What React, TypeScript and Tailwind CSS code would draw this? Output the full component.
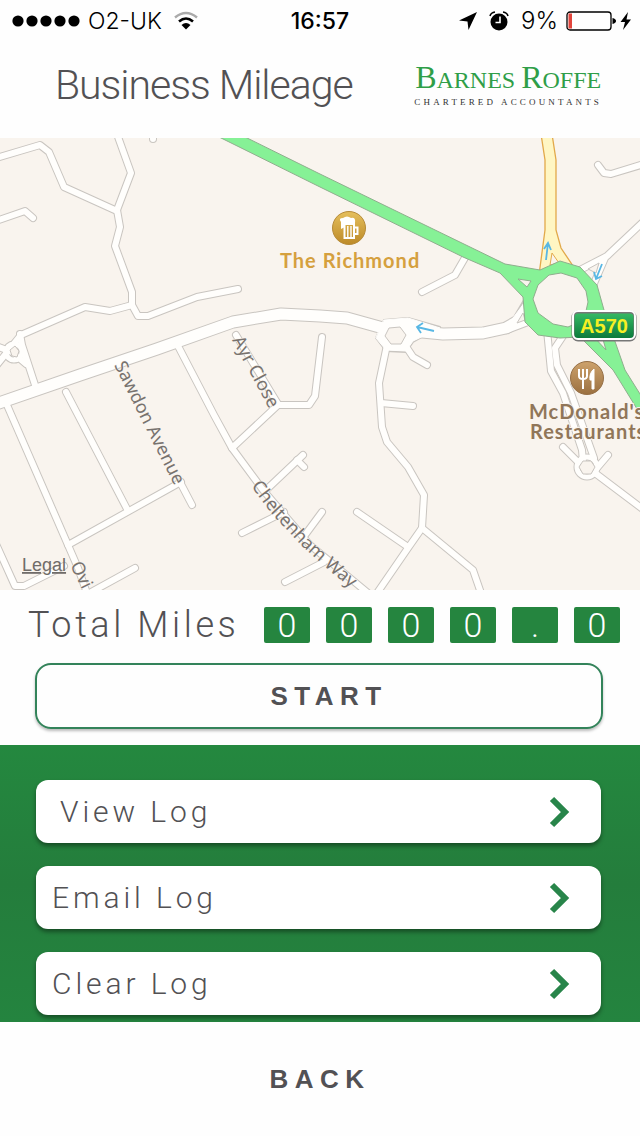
import React from "react";

interface LogLink {
  label: string;
  indent: string;
}

const logLinks: LogLink[] = [
  { label: "View Log", indent: "pl-6" },
  { label: "Email Log", indent: "pl-4" },
  { label: "Clear Log", indent: "pl-4" },
];

const digits = ["0", "0", "0", "0", ".", "0"];

const mainRoads = [
  "M-4 404 L80 375 L157 349 L233 322 L281 314 L320 316 L347 318 L383 328 L396 331",
  "M398 336 L412 331 L443 334 L483 333 L506 328 L534 312",
];

const smallRoads = [
  "M-4 158 L40 145 L49 152 L64 187 L117 211",
  "M117 134 L131 173 L117 210 L120 227 L115 246 L132 292 L132 305 L138 316 L148 316 L197 297 L238 289",
  "M132 305 L110 311 L85 307 L21 335 L-4 366",
  "M-4 221 L25 211 L33 218",
  "M20 334 L22 345 L36 388",
  "M-4 346 L12 352 L26 364",
  "M7 405 L68 545 L78 568 L88 596",
  "M66 392 L127 509",
  "M68 545 L181 482",
  "M181 484 L192 505",
  "M-4 544 L15 586 L24 586 L64 566",
  "M84 596 L135 568",
  "M177 344 L214 415 L232 448 L263 490 L310 545 L374 598",
  "M232 448 L278 405 L309 405 L315 396 L322 337",
  "M236 335 L278 404",
  "M266 490 L303 455",
  "M297 460 L304 467",
  "M242 533 L284 512",
  "M322 512 L305 535",
  "M285 582 L324 562",
  "M387 345 L379 383 L382 427 L387 442 L408 467 L424 495 L422 528 L408 548 L375 596",
  "M381 403 L413 406",
  "M357 512 L408 547",
  "M422 528 L473 570 L482 596",
  "M405 345 L413 357 L427 365",
  "M598 165 L604 173 L611 174 L644 164",
  "M153 134 L153 139",
  "M466 256 L455 275 L422 292",
  "M644 221 L607 256 L580 270",
  "M605 258 L592 288",
  "M547 330 L551 371 L563 393 L582 450 L583 462",
  "M563 336 L555 348 L557 365 L571 393 L594 458",
  "M563 447 L578 462",
  "M608 455 L597 468",
  "M595 473 L644 510",
  "M507 330 L536 319",
];

const StatusBar = () => (
  <header className="flex h-[42px] items-center justify-between px-3 font-['Inter',sans-serif] text-black">
    <div className="flex flex-1 items-center gap-2">
      <svg viewBox="0 0 68 12" className="h-3 w-17" aria-hidden="true">
        {[6, 20, 34, 48, 62].map((cx) => (
          <circle key={cx} cx={cx} cy="6" r="5.6" />
        ))}
      </svg>
      <span className="text-[23px] font-light">O2-UK</span>
      <svg viewBox="0 0 24 19" className="ml-1 h-5 w-6" fill="none" aria-hidden="true">
        <path d="M1 6 Q12 -3 23 6" stroke="#aaa" strokeWidth="2.4" />
        <path d="M5 10 Q12 4 19 10" stroke="#000" strokeWidth="2.6" />
        <path d="M12 18 L7.5 13.5 Q12 9.500 16.500 13.500 Z" fill="#000" />
      </svg>
    </div>
    <time className="text-[23px] font-medium">16:57</time>
    <div className="flex flex-1 items-center justify-end gap-3">
      <svg viewBox="0 0 18 18" className="h-[18px] w-[18px]" aria-hidden="true">
        <path d="M18 0 L9.500 18 L8.500 9.500 L0 8.500 Z" />
      </svg>
      <svg viewBox="0 0 20 20" className="h-5 w-5" aria-hidden="true">
        <circle cx="10" cy="11" r="8.500" />
        <path d="M1 5 Q2 1.500 6 1 M19 5 Q18 1.500 14 1" stroke="#000" strokeWidth="1.600" fill="none" />
        <path d="M11 5.500 V11.500 H6.500" stroke="#fff" strokeWidth="1.600" fill="none" />
      </svg>
      <span className="text-2xl font-light">9%</span>
      <svg viewBox="0 0 66 20" className="-ml-1 -mr-1 h-5 w-[66px]" aria-hidden="true">
        <rect x="1" y="1" width="44" height="18" rx="3" fill="#fff" stroke="#000" strokeWidth="1.300" />
        <rect x="2.500" y="2.500" width="3.500" height="15" fill="#e2453c" />
        <path d="M46.500 7 Q50 8 50 10 Q50 12 46.500 13 Z" />
        <path d="M62 1 L54.500 11 H59 L57 19 L65 8.500 H60.500 Z" />
      </svg>
    </div>
  </header>
);

const Brand = () => (
  <div className="flex flex-col items-center font-['Liberation_Serif',serif]">
    <span className="text-2xl leading-6 text-[#2f9e48]">
      <span className="text-[32px]">B</span>ARNES <span className="text-[32px]">R</span>OFFE
    </span>
    <span className="mt-1 text-[9px] leading-3 tracking-[0.35em] text-[#333]">
      CHARTERED ACCOUNTANTS
    </span>
  </div>
);

const RouteMap = () => (
  <svg viewBox="0 138 640 452" className="block h-auto w-full" role="img" aria-label="Map">
    <defs>
      <linearGradient id="sign" x1="0" y1="0" x2="0" y2="1">
        <stop offset="0" stopColor="#38bd67" />
        <stop offset="1" stopColor="#087538" />
      </linearGradient>
      <linearGradient id="gold" x1="0" y1="0" x2="0" y2="1">
        <stop offset="0" stopColor="#e5bf5c" />
        <stop offset="1" stopColor="#bd8a28" />
      </linearGradient>
      <linearGradient id="bronze" x1="0" y1="0" x2="0" y2="1">
        <stop offset="0" stopColor="#cda26c" />
        <stop offset="1" stopColor="#9b7040" />
      </linearGradient>
      <path id="sawdon" d="M114 365 L194 525" />
      <path id="ayr" d="M232 340 L284 436" />
      <path id="cheltenham" d="M251 486 L271 513 L301 545 L331 572 L378 610" />
      <path id="ovington" d="M70 565 L92 610" />
    </defs>
    <rect y="138" width="640" height="452" fill="#f9f4ee" />

    {/* road casings go first so that the junctions stay open */}
    <g fill="none" stroke="#c9c5c0" strokeLinejoin="round" strokeLinecap="round">
      {smallRoads.map((d) => (
        <path key={d} d={d} strokeWidth="8" />
      ))}
      {mainRoads.map((d) => (
        <path key={d} d={d} strokeWidth="13" />
      ))}
      <path d="M384 320 L408 318 L440 327 L413 342 L406 352 L386 351 L376 338 Z" strokeWidth="2" />
      <path d="M510 324 L524 300 L532 318 Z" strokeWidth="2" />
      <circle cx="14" cy="352" r="8" strokeWidth="7" />
      <circle cx="587" cy="467" r="10" strokeWidth="7" />
    </g>
    <g fill="none" stroke="#fffefc" strokeLinejoin="round" strokeLinecap="round">
      {smallRoads.map((d) => (
        <path key={d} d={d} strokeWidth="6" />
      ))}
      {mainRoads.map((d) => (
        <path key={d} d={d} strokeWidth="11" />
      ))}
      <path d="M384 320 L408 318 L440 328 L413 341 L406 351 L386 350 L376 338 Z" fill="#fffefc" strokeWidth="1" />
      <path d="M507 326 L525 302 L534 318 Z" fill="#fffefc" strokeWidth="1" />
      <circle cx="14" cy="352" r="8" strokeWidth="5" />
      <circle cx="587" cy="467" r="10" strokeWidth="5" />
    </g>
    <g fill="#f9f4ee" stroke="#c9c5c0">
      <path d="M389 328 L400 327 L406 335 L401 344 L391 344 L385 336 Z" />
      <path d="M10 350 L15 346 L19 351 L17 357 L12 356 Z" />
      <path d="M583 461 H591 L595 467 L591 474 H583 L579 467 Z" />
      <path d="M517 323 L523 313 L525 320 Z" />
      <path d="M588 269 L599 263 L596 273 Z" />
    </g>

    <path
      d="M541 134 L545 160 V230 L539 275 L577 272 L561 248 L556 230 V160 L552 134 Z"
      fill="#fff6c3"
      stroke="#e2a94a"
      strokeWidth="1.300"
    />
    <path d="M552 253 L559 263 L550 265 Z" fill="#f9f4ee" stroke="#e2a94a" />

    <path
      d="M213 134 L320 187 L463 257 L500 273 L523 297 L525 322 L538 335 L560 338 L580 337 L613 370 L618 378 L650 430 V410 L625 370 L604 310 L597 285 L580 267 L560 261 L540 270 L505 264 L320 174 L239 134 Z"
      fill="#86f196"
      stroke="#8fae8d"
      strokeWidth="1"
    />
    <path
      d="M561 273 L577 278 L586 291 L588 302 L584 320 L568 327 L553 324 L538 313 L533 299 L538 285 L549 275 Z"
      fill="#f9f4ee"
      stroke="#8fae8d"
    />
    <path d="M518 279 L531 281 L527 287 Z M594 337 L606 350 L602 336 Z" fill="#f9f4ee" stroke="#8fae8d" />

    <g stroke="#58b7e4" strokeWidth="1.800" fill="none">
      <path d="M546 260 L548 243 M544 249 L548 243 L551 250" />
      <path d="M602 264 L596 279 M594 272 L596 279 L602 276" />
      <path d="M434 331 L417 327 M423 323 L417 327 L421 333" />
    </g>

    <g
      className="font-['Noto_Sans',sans-serif] text-[18px]"
      fill="#77726e"
      stroke="#f9f4ee"
      strokeWidth="1"
      paintOrder="stroke"
    >
      <text>
        <textPath href="#sawdon">Sawdon Avenue</textPath>
      </text>
      <text>
        <textPath href="#ayr">Ayr Close</textPath>
      </text>
      <text>
        <textPath href="#cheltenham">Cheltenham Way</textPath>
      </text>
      <text>
        <textPath href="#ovington">Ovi</textPath>
      </text>
    </g>

    <circle cx="349" cy="228" r="16.500" fill="url(#gold)" stroke="#b68b39" />
    <path d="M341 229 V222 Q338 218 343 218 Q347 215 351 218 Q356 217 355 223 H345 V227" fill="#fff" />
    <path d="M344.500 224 H354 V238 H344.500 Z M354 227.500 H357.500 V234 H354" fill="none" stroke="#fff" strokeWidth="2" />
    <path d="M347.800 226 V237 M351 226 V237" stroke="#fff" strokeWidth="1.400" />

    <circle cx="587" cy="378" r="16.500" fill="url(#bronze)" stroke="#967047" />
    <path d="M579 369 V376 Q579 379 583 379 Q587 379 587 376 V369 M583 369 V389" fill="none" stroke="#fff" strokeWidth="2" />
    <path d="M594 369 V389 H592 V380 H590 Q589 373 594 369 Z" fill="#fff" stroke="#fff" strokeWidth="1" />

    <g
      className="font-['Lato',sans-serif] text-[20px] font-bold tracking-wider"
      stroke="#f9f4ee"
      strokeWidth="2"
      paintOrder="stroke"
    >
      <text x="280" y="268" fill="#d5a03e">
        The Richmond
      </text>
      <text x="529" y="419" fill="#907659">
        McDonald's
      </text>
      <text x="530" y="439" fill="#907659">
        Restaurants
      </text>
    </g>

    <rect x="573" y="312" width="62" height="28" rx="5" fill="url(#sign)" stroke="#777" strokeWidth="3" />
    <rect x="573" y="311" width="62" height="28" rx="5" fill="none" stroke="#fff" strokeWidth="2" />
    <text
      x="604"
      y="333"
      textAnchor="middle"
      fill="#f6ef24"
      className="font-['Liberation_Sans',sans-serif] text-[20px] font-bold"
    >
      A570
    </text>
    <a href="#legal">
      <text
        x="22"
        y="571"
        fill="#706c69"
        className="font-['Liberation_Sans',sans-serif] text-[18px] underline"
      >
        Legal
      </text>
    </a>
  </svg>
);

const Chevron = () => (
  <svg viewBox="0 0 22 32" className="h-8 w-[22px]" fill="none" aria-hidden="true">
    <path d="M3 3 L16 16 L3 29" stroke="#28854a" strokeWidth="6" />
  </svg>
);

export default function App() {
  return (
    <div className="flex min-h-screen flex-col bg-[#fefefe] font-['Roboto',sans-serif] text-[#525154]">
      <StatusBar />
      <div className="flex h-24 items-center justify-between pb-2 pl-[55px] pr-[38px]">
        <h1 className="text-[41px] font-light tracking-tight">Business Mileage</h1>
        <Brand />
      </div>
      <RouteMap />
      <main>
        <section className="flex items-center justify-between pb-5 pl-7 pr-5 pt-[17px]">
          <h2 className="text-4xl leading-9 font-light tracking-widest">Total Miles</h2>
          <div className="flex gap-4">
            {digits.map((digit, index) => (
              <span
                key={index}
                className="flex h-9 w-[46px] items-center justify-center rounded-xs bg-[#25853f] text-[34px] font-light leading-9 text-white"
              >
                {digit}
              </span>
            ))}
          </div>
        </section>
        <div className="pb-4 pl-[35px] pr-[37px]">
          <button className="h-[66px] w-full rounded-2xl border-2 border-[#33835a] pl-5 font-['Liberation_Sans',sans-serif] text-[26px] font-bold tracking-[0.25em] shadow-[0_2px_3px_#0004]">
            START
          </button>
        </div>
        <nav className="flex flex-col gap-[23px] bg-linear-to-b from-[#24883f] via-[#247d3c] to-[#24843f] pb-[7px] pl-9 pr-[39px] pt-[35px]">
          {logLinks.map((link) => (
            <button
              key={link.label}
              className={`flex h-[63px] items-center justify-between rounded-xl bg-white pr-[30px] text-[30px] font-light tracking-[0.13em] shadow-[0_3px_4px_#0006] ${link.indent}`}
            >
              {link.label}
              <Chevron />
            </button>
          ))}
        </nav>
      </main>
      <footer className="flex flex-1 items-center justify-center">
        <button className="font-['Liberation_Sans',sans-serif] text-[26px] font-bold tracking-[0.25em]">
          BACK
        </button>
      </footer>
    </div>
  );
}
